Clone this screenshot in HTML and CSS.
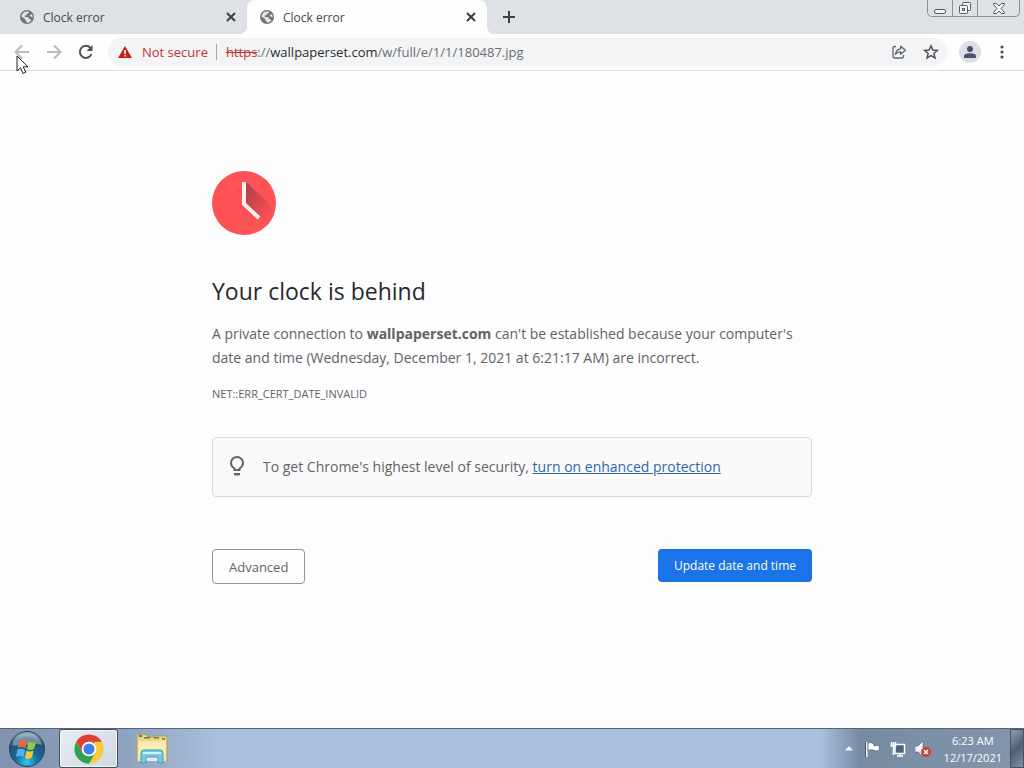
FILE: index.html
```html
<!DOCTYPE html>
<html lang="en">
<head>
    <meta charset="UTF-8">
    <meta name="viewport" content="width=device-width, initial-scale=1.0">
    <title>Clock error</title>
    <link rel="stylesheet" href="styles.css">
</head>
<body>
    <!-- Shared icons -->
    <svg class="defs" width="0" height="0">
        <symbol id="globe" viewBox="0 0 16 16">
            <circle cx="8" cy="8" r="7" fill="#707579"/>
            <path d="M2.500 8C2.500 5 4.500 2.800 7.500 2.400H10L9.800 4 7.800 4.800V6.300H5.800V8H9.200L10 10H11.500V11.500L12.300 12A5.500 5.500 0 0 0 13.500 8L11.500 7.500 10.500 6.200 12.700 5.200A5.700 5.700 0 0 1 13.700 8 5.700 5.700 0 0 1 8 13.700L7.500 12 6 11V9.800L2.500 7.500Z" fill="#e4e6e9"/>
        </symbol>
        <symbol id="cross" viewBox="0 0 10 10">
            <path d="M1 1L9 9M9 1L1 9" stroke="#3c4043" stroke-width="2" fill="none"/>
        </symbol>
    </svg>

    <header class="browser">
        <div class="tab-strip">
            <div class="tab">
                <svg class="favicon"><use href="#globe"/></svg>
                <button class="tab-title">Clock error</button>
                <button class="close" aria-label="Close tab"><svg width="10" height="10"><use href="#cross"/></svg></button>
            </div>
            <div class="tab active">
                <svg class="favicon"><use href="#globe"/></svg>
                <button class="tab-title">Clock error</button>
                <button class="close" aria-label="Close tab"><svg width="10" height="10"><use href="#cross"/></svg></button>
            </div>
            <button class="new-tab" aria-label="New tab">
                <svg width="12" height="12" viewBox="0 0 12 12"><path d="M6 0V12M0 6H12" stroke="#3c4043" stroke-width="2"/></svg>
            </button>
            <div class="window-controls">
                <button aria-label="Minimize"><svg width="14" height="14" viewBox="0 0 14 14"><rect x="1.5" y="8.5" width="11" height="4" rx="1.5" fill="#f4f5f7" stroke="#555960"/></svg></button>
                <button aria-label="Restore"><svg width="14" height="14" viewBox="0 0 14 14"><rect x="4.500" y="1.500" width="8" height="8" rx="1" fill="#f4f5f7" stroke="#555960"/><rect x="1.500" y="4.500" width="8" height="8" rx="1" fill="#f4f5f7" stroke="#555960"/><rect x="4.500" y="7.500" width="2" height="2" fill="none" stroke="#555960"/></svg></button>
                <button class="window-close" aria-label="Close"><svg width="14" height="14" viewBox="0 0 14 14"><path d="M1.500 2.500H4.500L7 5 9.500 2.500H12.500V3.500L9 7.500 12.500 11.500V12.500H9.500L7 10 4.500 12.500H1.500V11.500L5 7.500 1.500 3.500Z" fill="#f4f5f7" stroke="#555960"/></svg></button>
            </div>
        </div>
        <div class="toolbar">
            <button class="tool" aria-label="Back"><svg width="16" height="16" viewBox="0 0 16 16"><path d="M15 8H2M8 1.500L1.500 8 8 14.500" fill="none" stroke="#b8babd" stroke-width="2"/></svg></button>
            <button class="tool" aria-label="Forward"><svg width="16" height="16" viewBox="0 0 16 16"><path d="M1 8H14M8 1.500L14.500 8 8 14.500" fill="none" stroke="#b8babd" stroke-width="2"/></svg></button>
            <button class="tool" aria-label="Reload"><svg width="16" height="16" viewBox="0 0 16 16"><path d="M13.500 10A6 6 0 1 1 12.300 3.800" fill="none" stroke="#505357" stroke-width="2"/><path d="M14.500 1V7H8.500Z" fill="#505357"/></svg></button>
            <div class="omnibox">
                <button class="security">
                    <svg width="14" height="14" viewBox="0 0 14 14"><path d="M7 1L14 13H0Z" fill="#c5221f"/><path d="M7 5V9M7 10V11.500" stroke="#fff" stroke-width="1.500"/></svg>
                    Not secure
                </button>
                <div class="url" role="textbox" contenteditable="true" spellcheck="false" aria-label="Address"><s>https</s>://<span class="host">wallpaperset.com</span>/w/full/e/1/1/180487.jpg</div>
                <button class="omni-icon" aria-label="Share"><svg width="16" height="16" viewBox="0 0 16 16"><path d="M5 2.500H3.500Q2 2.500 2 4V12.500Q2 14 3.500 14H11Q12.500 14 12.500 12.500V11" fill="none" stroke="#5f6368" stroke-width="1.300"/><path d="M4.500 10.500C4.800 7 6.500 5 9.700 4.800V2.200L14.500 6.300 9.700 10.300V7.800C7.300 7.800 5.700 8.700 4.500 10.500Z" fill="none" stroke="#5f6368" stroke-width="1.300" stroke-linejoin="round"/></svg></button>
                <button class="omni-icon" aria-label="Bookmark this tab"><svg width="16" height="16" viewBox="0 0 16 16"><path d="M8 1.800L9.800 6 14.400 6.400 10.900 9.400 12 13.900 8 11.500 4 13.900 5.100 9.400 1.600 6.400 6.200 6Z" fill="none" stroke="#505357" stroke-width="1.500"/></svg></button>
            </div>
            <button class="profile" aria-label="Profile"><svg width="14" height="14" viewBox="0 0 14 14"><circle cx="7" cy="4" r="3" fill="#4d5168"/><path d="M1 13V11C1 7.300 13 7.300 13 11V13Z" fill="#4d5168"/></svg></button>
            <button class="tool" aria-label="Menu"><svg width="4" height="14" viewBox="0 0 4 14"><g fill="#4b4e52"><circle cx="2" cy="2" r="1.600"/><circle cx="2" cy="7" r="1.600"/><circle cx="2" cy="12" r="1.600"/></g></svg></button>
        </div>
    </header>

    <main>
        <div class="interstitial">
            <svg class="clock" width="64" height="64" viewBox="0 0 64 64">
                <defs>
                    <clipPath id="face"><circle cx="32" cy="32" r="32"/></clipPath>
                    <linearGradient id="shade" x1="0" y1="0" x2="1" y2="1"><stop offset="0" stop-color="#a93f46"/><stop offset="0.800" stop-color="#ff5257"/></linearGradient>
                </defs>
                <circle cx="32" cy="32" r="32" fill="#ff5257"/>
                <path d="M34 11L66 41 56 55 34 33Z" fill="url(#shade)" clip-path="url(#face)"/>
                <path d="M32 11V33L47 47" fill="none" stroke="#fff0ec" stroke-width="4"/>
            </svg>
            <h1>Your clock is behind</h1>
            <p>A private connection to <strong>wallpaperset.com</strong> can't be established because your computer's date and time (Wednesday, December 1, 2021 at 6:21:17 AM) are incorrect.</p>
            <div class="error-code">NET::ERR_CERT_DATE_INVALID</div>
            <div class="promo">
                <svg width="20" height="24" viewBox="0 0 20 24"><path d="M7.500 15V13.500C5.500 12.300 4 10.500 4 8A6 6 0 0 1 16 8C16 10.500 14.500 12.300 12.500 13.500V15Z" fill="none" stroke="#606469" stroke-width="2"/><path d="M7 18H13V19.500Q13 20.500 12 20.500H8Q7 20.500 7 19.500Z" fill="#606469"/></svg>
                <span>To get Chrome's highest level of security, <a href="#">turn on enhanced protection</a></span>
            </div>
            <div class="buttons">
                <button class="advanced">Advanced</button>
                <button class="update">Update date and time</button>
            </div>
        </div>
    </main>

    <footer class="taskbar">
        <button class="start" aria-label="Start">
            <svg width="38" height="38" viewBox="0 0 38 38">
                <defs>
                    <radialGradient id="orb" cx="50%" cy="88%" r="85%"><stop offset="0" stop-color="#35c8ee"/><stop offset="0.400" stop-color="#14699f"/><stop offset="0.800" stop-color="#28506f"/><stop offset="1" stop-color="#8fa9bd"/></radialGradient>
                </defs>
                <circle cx="19" cy="19" r="17.500" fill="url(#orb)" stroke="#23405c"/>
                <path d="M4 15A15.500 15.500 0 0 1 34 15C25 11 14 18 4 15Z" fill="#fff" opacity="0.350"/>
                <path d="M12 11Q15.500 9 19 11L17.500 18Q14 16 10 18Z" fill="#ee6536"/>
                <path d="M20.500 12Q24 13.500 28 12L26 19Q22.500 21 19 19Z" fill="#96c83f"/>
                <path d="M9.500 19.500Q13 18 17 20L15.500 27Q12 25 8 27Z" fill="#55b7e9"/>
                <path d="M18.500 20.500Q22 22.500 25.500 20.500L24 27.500Q20.500 30 17 28Z" fill="#fbc83a"/>
            </svg>
        </button>
        <button class="task running" aria-label="Google Chrome">
            <svg width="30" height="30" viewBox="0 0 30 30">
                <path d="M15 15L2.300 7.700A14.700 14.700 0 0 1 27.700 7.700Z" fill="#df4034"/>
                <path d="M15 7.700H27.700A14.700 14.700 0 0 1 15 29.700L21.300 18.700Z" fill="#fbcb3c"/>
                <path d="M2.300 7.700L8.700 18.700 15 22.300 21.300 18.700 15 29.700A14.700 14.700 0 0 1 2.300 7.700Z" fill="#31a350"/>
                <path d="M2.300 7.700L8.700 18.700 15 15 21 7.700Z" fill="#df4034"/>
                <circle cx="15" cy="15" r="7.300" fill="#fff"/>
                <circle cx="15" cy="15" r="5.600" fill="#437fea"/>
            </svg>
        </button>
        <button class="task" aria-label="Windows Explorer">
            <svg width="32" height="32" viewBox="0 0 32 32">
                <path d="M1 3Q1 1.500 3 1.500H10L12 4H17L19 3H29Q31 3 31 5V27H1Z" fill="#e9d68b" stroke="#b99f50"/>
                <path d="M3 2H6V4H3ZM8 4H14V5.500H8ZM18 4H23V5.500H18ZM26 5H29V6.500H26Z" fill="#66843d"/>
                <path d="M2 8H30V28H2Z" fill="#f7e9a7"/>
                <path d="M3 11H29M3 14H29" stroke="#fff3c4"/>
                <path d="M5 30V20Q5 17 8 17H24Q27 17 27 20V30H22V24H10V30Z" fill="#76c9e4" stroke="#469cbd"/>
                <path d="M7 20H25" stroke="#d5f3fc" stroke-width="2"/>
                <path d="M11 25H21V28H11Z" fill="#e2f0ed"/>
            </svg>
        </button>
        <div class="tray">
            <button aria-label="Show hidden icons"><svg width="8" height="5" viewBox="0 0 8 5"><path d="M0 4.500L4 0 8 4.500Z" fill="#f2f6fa"/></svg></button>
            <button aria-label="Action Center"><svg width="16" height="16" viewBox="0 0 16 16"><path d="M1.500 1V16" stroke="#fff" stroke-width="2"/><path d="M.5 1V16" stroke="#42536a"/><path d="M3 2Q6 .5 9 3V5Q12 3.500 15 5L14 7 15 9Q11 11 8 9 5 8 3 10Z" fill="#fff" stroke="#42536a" stroke-width=".7"/></svg></button>
            <button aria-label="Network"><svg width="16" height="16" viewBox="0 0 16 16"><path d="M5 3.500H14.500V12.500H5Z" fill="#52647b" stroke="#fff" stroke-width="1.500"/><path d="M7 15H13M10 12V15M1.500 1V5H5.500V1M3.500 1V14" fill="none" stroke="#fff" stroke-width="1.500"/></svg></button>
            <button aria-label="Volume muted"><svg width="16" height="16" viewBox="0 0 16 16"><path d="M0 5H3L8 0V15L3 11H0Z" fill="#f5f5f5" stroke="#566579" stroke-width=".6"/><circle cx="11" cy="11" r="5" fill="#d33a38"/><path d="M9 9L13 13M13 9L9 13" stroke="#fff" stroke-width="1.500"/></svg></button>
        </div>
        <div class="time">6:23 AM<br>12/17/2021</div>
        <button class="show-desktop" aria-label="Show desktop"></button>
    </footer>

    <svg class="cursor" width="14" height="20" viewBox="0 0 14 20"><path d="M1 1V16L4.500 12.800 7 18.500 9.800 17.200 7.200 11.800H12Z" fill="#fff" stroke="#222"/></svg>
</body>
</html>
```
FILE: styles.css
```css
* {
    box-sizing: border-box;
}

body {
    display: flex;
    flex-direction: column;
    min-height: 100vh;
    margin: 0;
    background-color: #fdfdfd;
    font-family: "Open Sans", "Noto Sans", sans-serif;
}

button {
    display: flex;
    align-items: center;
    justify-content: center;
    padding: 0;
    border: none;
    background: none;
    font-family: inherit;
    cursor: pointer;
}

.defs {
    position: absolute;
}

/* Tabs */
.tab-strip {
    display: flex;
    align-items: flex-start;
    height: 34px;
    padding: 0 4px 0 7px;
    background-color: #dee1e6;
}

.tab {
    display: flex;
    align-items: center;
    flex: 0 1 240px;
    height: 34px;
    padding: 0 10px 0 12px;
    border-radius: 8px 8px 0 0;
}

.tab.active {
    position: relative;
    background-color: #fdfdfd;
}

/* Curved feet of the active tab */
.tab.active::before,
.tab.active::after {
    content: "";
    position: absolute;
    bottom: 0;
    width: 8px;
    height: 8px;
}

.tab.active::before {
    right: 100%;
    background: radial-gradient(circle at 0 0, transparent 8px, #fdfdfd 8px);
}

.tab.active::after {
    left: 100%;
    background: radial-gradient(circle at 100% 0, transparent 8px, #fdfdfd 8px);
}

.favicon {
    width: 16px;
    height: 16px;
}

.tab-title {
    flex: 1;
    justify-content: flex-start;
    margin-left: 8px;
    color: #45494d;
    font-size: 12px;
}

.close {
    width: 12px;
    height: 16px;
}

.new-tab {
    width: 28px;
    height: 34px;
    margin-left: 8px;
}

.window-controls {
    display: flex;
    margin-left: auto;
    border: 1px solid #8b8f96;
    border-top: none;
    border-radius: 0 0 5px 5px;
}

.window-controls button {
    width: 25px;
    height: 16px;
    border-right: 1px solid #8b8f96;
}

.window-controls .window-close {
    width: 41px;
    border-right: none;
}

/* Toolbar */
.toolbar {
    display: flex;
    align-items: center;
    gap: 4px;
    height: 37px;
    padding: 0 8px;
    border-bottom: 1px solid #dadce0;
}

.tool {
    width: 28px;
    height: 28px;
}

.omnibox {
    display: flex;
    align-items: center;
    flex: 1;
    height: 28px;
    margin: 0 8px 0 4px;
    padding: 0 0 0 10px;
    border-radius: 14px;
    background-color: #f3f4f5;
    font-size: 13px;
}

.security {
    gap: 10px;
    padding-right: 8px;
    border-right: 1px solid #a5a8ab;
    color: #c5332e;
    font-size: 13px;
    line-height: 16px;
}

.url {
    flex: 1;
    margin-left: 9px;
    color: #6b6f73;
    white-space: nowrap;
}

.url s {
    color: #c5332e;
}

.host {
    color: #2a2c30;
}

.omni-icon {
    width: 32px;
    height: 28px;
}

.profile {
    width: 22px;
    height: 22px;
    margin-right: 3px;
    border-radius: 50%;
    background-color: #dcdfe6;
}

/* Error page */
main {
    flex: 1;
    padding: 0 24px;
}

.interstitial {
    max-width: 600px;
    margin: 100px auto 0;
    color: #5f6368;
    font-size: 14px;
    line-height: 24px;
}

.clock {
    display: block;
}

h1 {
    margin: 40px 0 15px;
    color: #27292d;
    font-size: 23px;
    font-weight: 400;
    line-height: 32px;
}

p {
    margin: 0;
}

.error-code {
    margin-top: 12px;
    font-size: 11px;
}

.promo {
    display: flex;
    align-items: center;
    gap: 16px;
    margin-top: 31px;
    padding: 17px 14px;
    border: 1px solid #dadce0;
    border-radius: 4px;
    background-color: #fafafa;
}

.promo a {
    color: #2e67ae;
}

.buttons {
    display: flex;
    align-items: flex-start;
    justify-content: space-between;
    margin-top: 52px;
}

.buttons button {
    padding: 0 16px;
    border-radius: 4px;
}

.buttons .advanced {
    height: 35px;
    border: 1px solid #909397;
    color: #5f6368;
    font-size: 13px;
}

.buttons .update {
    height: 33px;
    background-color: #1a73e8;
    color: #fff;
    font-size: 12px;
    font-weight: 500;
}

/* Taskbar */
.taskbar {
    display: flex;
    align-items: center;
    height: 40px;
    border-top: 1px solid #53647a;
    background: linear-gradient(to right, #8193ae 0, #8fa4c1 130px, #a9c1de 220px, #a9c1de 80%, #778ba3 84%, #8295ab 100%);
}

.start {
    width: 54px;
    height: 39px;
}

.task {
    width: 59px;
    height: 39px;
    margin-left: 5px;
}

.task + .task {
    margin-left: 4px;
}

.running {
    border: 1px solid #3e4c5e;
    border-radius: 3px;
    background: linear-gradient(135deg, #e8edf4, #cfd7e2);
    box-shadow: inset 0 0 0 1px #f7f9fc;
}

.tray {
    display: flex;
    align-items: center;
    gap: 9px;
    margin-left: auto;
}

.tray button:first-child {
    margin-right: 3px;
}

.time {
    margin: 0 8px 0 13px;
    color: #fff;
    font-size: 11px;
    line-height: 17px;
    text-align: center;
}

.show-desktop {
    width: 14px;
    height: 39px;
    border: 1px solid #465366;
    background: linear-gradient(135deg, #8d9db0, #4f6075 50%, #7f91a6);
}

.cursor {
    position: absolute;
    top: 55px;
    left: 16px;
    pointer-events: none;
}
```
